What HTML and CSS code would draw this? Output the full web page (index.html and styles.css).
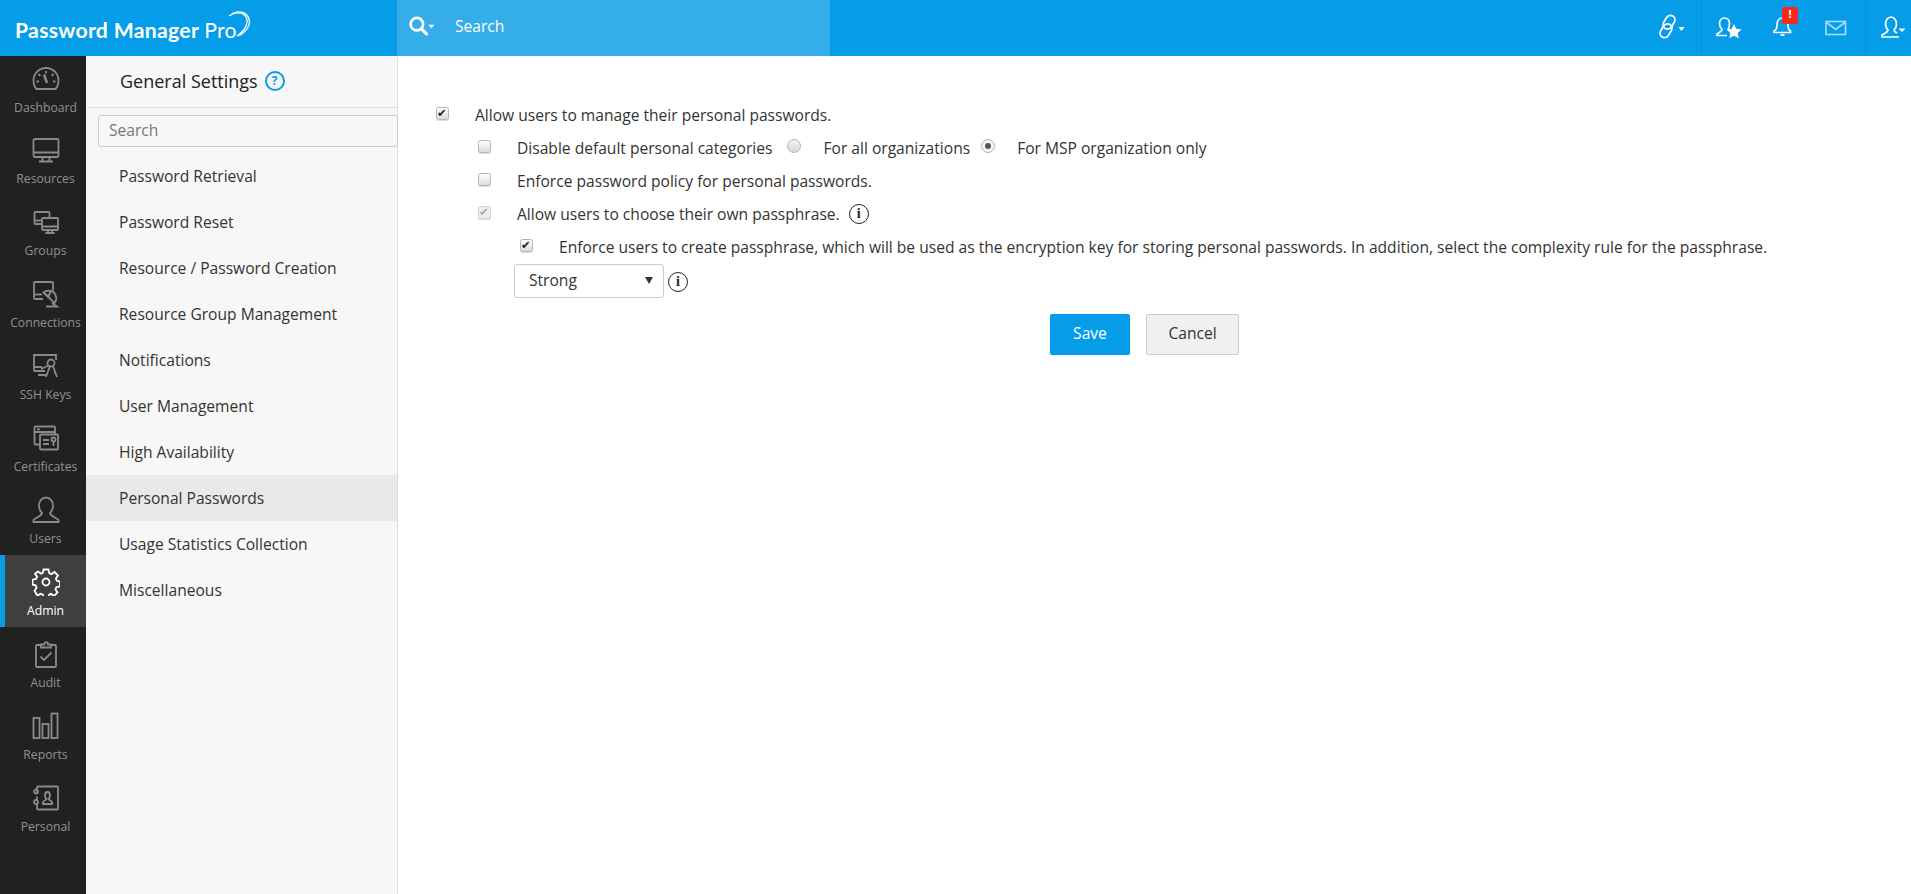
FILE: index.html
```html
<!DOCTYPE html>
<html lang="en">
<head>
<meta charset="utf-8">
<title>Password Manager Pro</title>
<link rel="stylesheet" href="styles.css">
</head>
<body>
<header class="topbar">
  <div class="logo">
    <span class="logo-text">Password Manager <span class="logo-light">Pro</span></span>
    <svg class="logo-swoosh" viewBox="0 0 30 34" width="30" height="34" fill="none" stroke="#fff">
      <path d="M5 6C11 1.500 19 2 22 7c2.500 4.500 1 12-9 19" stroke-width="1.300"/>
      <path d="M8 3.500C15 0 22 2 24.500 7.500c2 5 0 12-10 18.500" stroke-width="1.200" opacity=".85"/>
      <path d="M12 2c6 0 11 2 13 6.500 2 5 0 11.500-9 17" stroke-width="1.100" opacity=".7"/>
    </svg>
  </div>
  <div class="top-search">
    <svg class="top-search-icon" viewBox="0 0 26 22" width="30" height="25" fill="none" stroke="#fff">
      <circle cx="8.500" cy="9" r="5.500" stroke-width="2.400"/>
      <path d="M12.500 13l4.500 4.500" stroke-width="2.800" stroke-linecap="round"/>
      <path d="M18.500 9.500h5.500l-2.750 3z" fill="#fff" stroke="none"/>
    </svg>
    <span>Search</span>
  </div>
  <div class="top-actions">
    <div class="top-cell top-cell-link">
      <svg viewBox="0 0 30 28" width="30" height="28" fill="none" stroke="#fff" stroke-width="1.800">
        <rect x="6.500" y="1" width="9" height="14.500" rx="4.500" transform="rotate(32 11 8.250)"/>
        <rect x="3.500" y="9.500" width="9" height="14.500" rx="4.500" transform="rotate(32 8 16.750)"/>
        <path d="M20.500 13h6l-3 4z" fill="#fff" stroke="none"/>
      </svg>
    </div>
    <div class="top-cell top-cell-fav">
      <svg viewBox="0 0 28 28" width="28" height="28" fill="none" stroke="#fff" stroke-width="1.700">
        <path d="M13 15.500c1-1.500 1.500-3.500 1.500-6 0-3-2-5.500-5-5.500s-5 2.500-5 5.500c0 2.500 1 4.500 2.500 6 0 2-3 3-5 4.500v1.500h10"/>
        <path d="M19 10l2.300 4.800 5.200.7-3.800 3.600 1 5.200-4.700-2.500-4.700 2.500 1-5.200-3.800-3.600 5.200-.7z" fill="#fff" stroke="none"/>
      </svg>
    </div>
    <div class="top-cell top-cell-bell">
      <svg viewBox="0 3 24 28" width="24" height="28" fill="none" stroke="#fff" stroke-width="1.700">
        <path d="M3 21.500h16.500v-1.500c-2-1-2.500-3-2.500-6 0-4-2-7-5.500-7S6 10 6 14c0 3-.5 5-3 6z"/>
        <path d="M9.500 24h4"/>
      </svg>
      <span class="badge">!</span>
    </div>
    <div class="top-cell top-cell-mail">
      <svg viewBox="0 0 24 18" width="24" height="18" fill="none" stroke="#a9dcf7" stroke-width="1.600">
        <rect x="2" y="2.500" width="19.500" height="13"/>
        <path d="M2 3l9.700 7.500L21.500 3"/>
      </svg>
    </div>
    <div class="top-cell top-cell-user">
      <svg viewBox="0 0 30 28" width="30" height="28" fill="none" stroke="#fff" stroke-width="1.700">
        <path d="M20 23h-17v-2c2-1.500 6-2.500 6-5-1.500-1.500-2.500-3.500-2.500-6 0-3.500 2-7 5.500-7s5.500 3.500 5.500 7c0 2.500-1 4.500-2.500 6 0 1 1 2 3 3"/>
        <path d="M19.500 14.500h7l-3.500 3.500z" fill="#fff" stroke="none"/>
      </svg>
    </div>
  </div>
</header>

<div class="shell">
  <nav class="rail">
    <a class="rail-item rail-first">
      <svg class="rail-icon" viewBox="0 0 28 28"><path d="M4.500 24C2.500 22 1.500 19 1.500 15.500 1.500 8.500 7 3 14 3s12.500 5.500 12.500 12.500c0 3.500-1 6.500-3 8.500z"/><path d="M14 6v2.500M6.500 9l1.800 1.800M21.500 9l-1.800 1.800M4.500 16.500H7M23.500 16.500H21"/><path d="M12 9.500l3 8.500" stroke-width="2.500"/></svg>
      <span>Dashboard</span>
    </a>
    <a class="rail-item">
      <svg class="rail-icon" viewBox="0 0 28 28"><rect x="1.500" y="3" width="25" height="18" rx="1.500"/><path d="M1.500 16.500h25M10.500 21v4M17.500 21v4M7 25.500h14"/></svg>
      <span>Resources</span>
    </a>
    <a class="rail-item">
      <svg class="rail-icon" viewBox="0 0 28 28"><path d="M10 16H3.500a1 1 0 0 1-1-1V5a1 1 0 0 1 1-1h13a1 1 0 0 1 1 1v4"/><path d="M2.500 12.500H9"/><rect x="10" y="10" width="16" height="12" rx="1"/><path d="M10 18.500h16M16 22v3M20 22v3M13.500 25h9"/></svg>
      <span>Groups</span>
    </a>
    <a class="rail-item">
      <svg class="rail-icon" viewBox="0 0 28 28"><path d="M11 19H3a1 1 0 0 1-1-1V3a1 1 0 0 1 1-1h17a1 1 0 0 1 1 1v8"/><path d="M2 14.500h8"/><path d="M11.500 12.500C14 10 19 10 22 12.500c3 3 3 8 .5 10.500z"/><path d="M12 13l6 5M19 11l-3 6M20 23l5 3.500H14"/></svg>
      <span>Connections</span>
    </a>
    <a class="rail-item">
      <svg class="rail-icon" viewBox="0 0 28 28"><path d="M13 19H3a1 1 0 0 1-1-1V3h22v5"/><path d="M2 15h8M6 23h8"/><circle cx="19" cy="11" r="3.500"/><path d="M16.500 13.500L9 17M21 14l4 11M18 14l-4 11M22 20l2 1"/></svg>
      <span>SSH Keys</span>
    </a>
    <a class="rail-item">
      <svg class="rail-icon" viewBox="0 0 28 28"><path d="M8 20.500H3.500a1 1 0 0 1-1-1V3.500a1 1 0 0 1 1-1h18.500a1 1 0 0 1 1 1V10"/><path d="M2.500 8h20.500M5 5.300h3"/><rect x="8" y="10.500" width="18" height="15" rx="1"/><path d="M11 16h6M11 20h6"/><circle cx="21.500" cy="15.500" r="2"/><path d="M21.500 17.500V22"/></svg>
      <span>Certificates</span>
    </a>
    <a class="rail-item">
      <svg class="rail-icon" viewBox="0 0 28 28"><path d="M1.500 26h25v-2c-2-2.500-8-3.500-8.500-7 2-2 3-4.500 3-7.500C21 5 18 1.500 14 1.500S7 5 7 9.500c0 3 1 5.500 3 7.500-.5 3.500-6.500 4.500-8.500 7z"/></svg>
      <span>Users</span>
    </a>
    <a class="rail-item rail-active">
      <svg class="rail-icon" viewBox="0 0 28 28"><path d="M11.500 1.500h5l.7 3.600 2.300 1 3-2.100 3.500 3.500-2.100 3 1 2.300 3.100.7v5l-3.600.7-1 2.300 2.100 3-3.500 3.500-3-2.100-1.800.8-.7 3.600h-5l-.7-3.600-2.300-1-3 2.100L2.500 22.700l2.100-3-1-2.300-3.100-.7v-5l3.600-.7 1-2.300-2.100-3L6 3.500l3 2.100 1.800-.8z"/><circle cx="14" cy="14" r="3.500"/></svg>
      <span>Admin</span>
    </a>
    <a class="rail-item">
      <svg class="rail-icon" viewBox="0 0 28 28"><path d="M9 5H5a1 1 0 0 0-1 1v20a1 1 0 0 0 1 1h18a1 1 0 0 0 1-1V6a1 1 0 0 0-1-1h-4"/><path d="M9 7.500V4.500h3c0-3 4-3 4 0h3v3z"/><path d="M8.500 16.500l3.500 3.500 7.500-7.500"/></svg>
      <span>Audit</span>
    </a>
    <a class="rail-item">
      <svg class="rail-icon" viewBox="0 0 28 28"><rect x="1.500" y="6" width="6" height="20"/><rect x="10.500" y="12" width="6" height="14"/><rect x="19.500" y="1.500" width="6" height="24.500"/></svg>
      <span>Reports</span>
    </a>
    <a class="rail-item">
      <svg class="rail-icon" viewBox="0 0 28 28"><path d="M5 9V3.500a1 1 0 0 1 1-1h19a1 1 0 0 1 1 1v21a1 1 0 0 1-1 1H6a1 1 0 0 1-1-1v-5"/><path d="M5 12.500v4"/><circle cx="4" cy="7.500" r="2"/><circle cx="4" cy="18" r="2"/><path d="M11 20v-2c1-1.500 3-1.500 3.500-3-1-1-1.500-2-1.500-3.500 0-2 1-3.500 2.500-3.500s2.500 1.500 2.500 3.500c0 1.500-.5 2.500-1.500 3.500.5 1.500 2.500 1.500 3.500 3v2z"/></svg>
      <span>Personal</span>
    </a>
  </nav>

  <aside class="panel">
    <div class="panel-head">
      <span class="panel-title">General Settings</span>
      <span class="help">?</span>
    </div>
    <div class="panel-search">
      <input class="panel-input" type="text" placeholder="Search">
    </div>
    <ul class="menu">
      <li class="menu-item">Password Retrieval</li>
      <li class="menu-item">Password Reset</li>
      <li class="menu-item">Resource / Password Creation</li>
      <li class="menu-item">Resource Group Management</li>
      <li class="menu-item">Notifications</li>
      <li class="menu-item">User Management</li>
      <li class="menu-item">High Availability</li>
      <li class="menu-item menu-active">Personal Passwords</li>
      <li class="menu-item">Usage Statistics Collection</li>
      <li class="menu-item">Miscellaneous</li>
    </ul>
  </aside>

  <main class="content">
    <div class="row">
      <input class="check" type="checkbox" checked>
      <span class="label">Allow users to manage their personal passwords.</span>
    </div>
    <div class="row indent-1">
      <input class="check" type="checkbox">
      <span class="label">Disable default personal categories</span>
      <input class="radio radio-first" type="radio" name="scope">
      <span class="label">For all organizations</span>
      <input class="radio radio-second" type="radio" name="scope" checked>
      <span class="label">For MSP organization only</span>
    </div>
    <div class="row indent-1">
      <input class="check" type="checkbox">
      <span class="label">Enforce password policy for personal passwords.</span>
    </div>
    <div class="row indent-1">
      <input class="check check-off" type="checkbox" checked disabled>
      <span class="label">Allow users to choose their own passphrase.</span>
      <span class="info info-row">i</span>
    </div>
    <div class="row indent-2">
      <input class="check" type="checkbox" checked>
      <span class="label">Enforce users to create passphrase, which will be used as the encryption key for storing personal passwords. In addition, select the complexity rule for the passphrase.</span>
    </div>
    <div class="select-row">
      <div class="select-wrap">
        <select class="select"><option>Strong</option></select>
      </div>
      <span class="info info-select">i</span>
    </div>
    <div class="actions">
      <button class="btn btn-save" type="button">Save</button>
      <button class="btn btn-cancel" type="button">Cancel</button>
    </div>
  </main>
</div>
</body>
</html>
```
FILE: styles.css
```css
* { box-sizing: border-box; }
html, body { height: 100%; }
body {
  margin: 0;
  display: flex;
  flex-direction: column;
  height: 894px;
  overflow: hidden;
  background: #fff;
  color: #333;
  font-family: "Open Sans", "Liberation Sans", sans-serif;
  font-size: 15.6px;
}

/* Top bar */
.topbar {
  display: flex;
  height: 56px;
  flex: none;
  background: #059de8;
  color: #fff;
}
.logo {
  width: 397px;
  flex: none;
  display: flex;
  align-items: flex-start;
  padding: 10px 0 0 15px;
}
.logo-text {
  font-family: Lato, "Open Sans", sans-serif;
  font-size: 21.200px;
  font-weight: 700;
  line-height: 40px;
  white-space: nowrap;
  letter-spacing: .3px;
}
.logo-light { font-weight: 400; }
.logo-swoosh { flex: none; margin: 0 0 0 -13px; }
.top-search {
  width: 433px;
  flex: none;
  display: flex;
  align-items: center;
  padding: 0 0 4px 10px;
  background: #35ade9;
}
.top-search-icon { margin-right: 18px; }
.top-actions {
  flex: 1;
  display: flex;
  justify-content: flex-end;
}
.top-cell {
  display: flex;
  align-items: center;
  justify-content: center;
  position: relative;
}
.top-cell-link { width: 80px; justify-content: flex-end; padding-right: 13px; }
.top-cell-fav { width: 54px; border-left: 1px solid #0a91d6; }
.top-cell-bell { width: 56px; }
.top-cell-mail { width: 54px; padding-right: 5px; }
.top-cell-user { width: 46px; border-left: 1px solid #0a91d6; justify-content: flex-start; padding-left: 13px; }
.badge {
  position: absolute;
  left: 27px;
  top: 7px;
  width: 16px;
  height: 17px;
  border-radius: 2px;
  background: #f52a1a;
  color: #fff;
  font-size: 11px;
  font-weight: 700;
  line-height: 13px;
  text-align: center;
}

/* Layout */
.shell {
  flex: 1;
  display: flex;
  min-height: 0;
}

/* Icon rail */
.rail {
  width: 86px;
  flex: none;
  background: #212121;
}
.rail-item {
  display: flex;
  flex-direction: column;
  align-items: center;
  height: 72px;
  padding-top: 13px;
  border-left: 5px solid transparent;
  color: #8d9296;
  font-size: 12.200px;
  line-height: 16px;
}
.rail-first { height: 67px; padding-top: 9px; }
.rail-icon {
  width: 28px;
  height: 28px;
  margin-bottom: 7px;
  fill: none;
  stroke: #8a8a8a;
  stroke-width: 1.800;
}
.rail-active {
  background: #3f3f3f;
  border-left-color: #059de8;
  color: #fff;
}
.rail-active .rail-icon { stroke: #fff; }

/* Settings list */
.panel {
  width: 312px;
  flex: none;
  background: #f7f7f7;
  border-right: 1px solid #ddd;
}
.panel-head {
  display: flex;
  align-items: center;
  height: 52px;
  margin-left: 2px;
  padding: 0 0 2px 32px;
  border-bottom: 1px solid #ddd;
}
.panel-title {
  font-size: 18px;
  color: #222;
}
.help {
  width: 20px;
  height: 20px;
  margin-left: 7px;
  border: 2px solid #059de8;
  border-radius: 50%;
  color: #059de8;
  font-size: 12px;
  font-weight: 700;
  line-height: 16px;
  text-align: center;
}
.panel-search { padding: 7px 0 0 12px; }
.panel-input {
  display: block;
  width: calc(100% + 1px);
  height: 32px;
  padding: 0 10px 2px;
  border: 1px solid #ccc;
  border-radius: 3px;
  background: #f7f7f7;
  font: inherit;
  color: #333;
}
.panel-input::placeholder { color: #777; opacity: 1; }
.menu {
  list-style: none;
  margin: 6px 0 0;
  padding: 0;
}
.menu-item {
  height: 46px;
  padding-left: 33px;
  line-height: 46px;
  color: #333;
}
.menu-active { background: #e9e9e9; }

/* Form */
.content {
  flex: 1;
  padding: 42px 0 0 38px;
  min-width: 0;
}
.row {
  display: flex;
  align-items: center;
  height: 33px;
  white-space: nowrap;
}
.indent-1 { padding-left: 42px; }
.indent-2 { padding-left: 84px; }
.check {
  appearance: none;
  position: relative;
  flex: none;
  width: 13px;
  height: 13px;
  margin: 0 26px 3px 0;
  border: 1px solid #b4b4b4;
  border-radius: 2.500px;
  background: linear-gradient(#fff, #dcdcdc);
  box-shadow: 0 1px 0 #ddd;
}
.check:checked::after {
  content: "\2714";
  position: absolute;
  left: 0;
  top: -2px;
  font-family: "DejaVu Sans", sans-serif;
  font-size: 11.500px;
  line-height: 14px;
  color: #222;
}
.check-off { background: #eee; border-color: #d4d4d4; }
.check-off:checked::after { color: #aaa; }
.radio {
  appearance: none;
  position: relative;
  flex: none;
  width: 14px;
  height: 14px;
  margin: 0 22px 3px 0;
  border: 1px solid #b4b4b4;
  border-radius: 50%;
  background: linear-gradient(#f4f4f4, #d8d8d8);
}
.radio-first { margin-left: 15px; }
.radio-second { margin-left: 11px; margin-right: 22px; background: #f4f4f4; }
.radio:checked::after {
  content: "";
  position: absolute;
  left: 3px;
  top: 3px;
  width: 6px;
  height: 6px;
  border-radius: 50%;
  background: #555;
}
.info {
  width: 20px;
  height: 20px;
  flex: none;
  border: 1.500px solid #222;
  border-radius: 50%;
  color: #222;
  font-family: "Liberation Serif", serif;
  font-size: 14px;
  font-weight: 700;
  line-height: 17px;
  text-align: center;
}
.info-row { margin-left: 9px; }
.info-select { margin-top: 2px; }
.select-row {
  display: flex;
  align-items: center;
  gap: 4px;
  margin: 1px 0 0 78px;
  height: 34px;
}
.select-wrap { position: relative; width: 150px; height: 34px; }
.select-wrap::after {
  content: "";
  position: absolute;
  right: 11px;
  top: 13px;
  border: 4px solid transparent;
  border-top: 7px solid #333;
  border-bottom: 0;
}
.select {
  appearance: none;
  display: block;
  width: 100%;
  height: 100%;
  padding: 0 14px 2px;
  border: 1px solid #ccc;
  border-radius: 3px;
  background: #fff;
  font: inherit;
  color: #333;
}
.actions {
  display: flex;
  gap: 16px;
  margin: 16px 0 0 614px;
}
.btn {
  height: 41px;
  padding: 0 0 3px;
  border-radius: 2px;
  font: inherit;
  cursor: pointer;
}
.btn-save {
  width: 80px;
  border: 0;
  background: #059de8;
  color: #fff;
}
.btn-cancel {
  width: 93px;
  border: 1px solid #ccc;
  background: #f0f0f0;
  color: #333;
}
```
